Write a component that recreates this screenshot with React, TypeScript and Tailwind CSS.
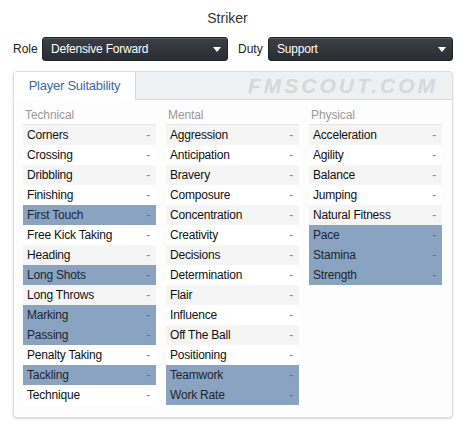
import React from 'react';

type Attr = { name: string; hl?: boolean };

const technical: Attr[] = [
  { name: 'Corners' },
  { name: 'Crossing' },
  { name: 'Dribbling' },
  { name: 'Finishing' },
  { name: 'First Touch', hl: true },
  { name: 'Free Kick Taking' },
  { name: 'Heading' },
  { name: 'Long Shots', hl: true },
  { name: 'Long Throws' },
  { name: 'Marking', hl: true },
  { name: 'Passing', hl: true },
  { name: 'Penalty Taking' },
  { name: 'Tackling', hl: true },
  { name: 'Technique' },
];

const mental: Attr[] = [
  { name: 'Aggression' },
  { name: 'Anticipation' },
  { name: 'Bravery' },
  { name: 'Composure' },
  { name: 'Concentration' },
  { name: 'Creativity' },
  { name: 'Decisions' },
  { name: 'Determination' },
  { name: 'Flair' },
  { name: 'Influence' },
  { name: 'Off The Ball' },
  { name: 'Positioning' },
  { name: 'Teamwork', hl: true },
  { name: 'Work Rate', hl: true },
];

const physical: Attr[] = [
  { name: 'Acceleration' },
  { name: 'Agility' },
  { name: 'Balance' },
  { name: 'Jumping' },
  { name: 'Natural Fitness' },
  { name: 'Pace', hl: true },
  { name: 'Stamina', hl: true },
  { name: 'Strength', hl: true },
];

function Select({ value, width }: { value: string; width: string }) {
  return (
    <div
      className={`${width} h-6 rounded-[3px] border border-[#1f2226] bg-gradient-to-b from-[#3c4046] to-[#2a2d32] flex items-center justify-between pl-[8px] pr-[6px] text-white text-[12px] tracking-[-0.2px] shadow-[inset_0_1px_0_#55595f]`}
    >
      <span>{value}</span>
      <svg width="8" height="5" viewBox="0 0 8 5">
        <path d="M0 0 L8 0 L4 5 Z" fill="#ffffff" />
      </svg>
    </div>
  );
}

function Column({ title, items }: { title: string; items: Attr[] }) {
  return (
    <div className="flex flex-col">
      <div className="h-[20px] border-b border-[#e6e6e6] text-[#9a9a9a] text-[12px] tracking-[-0.1px] leading-[20px] pl-[2px]">
        {title}
      </div>
      {items.map((a, i) => (
        <div
          key={a.name}
          className={`h-[20px] flex items-center justify-between pl-[4px] pr-[6px] text-[12px] tracking-[-0.2px] ${
            a.hl
              ? 'bg-[#8aa3c0] text-[#1e2530]'
              : i % 2 === 0
              ? 'bg-[#f5f5f5] text-[#111]'
              : 'bg-white text-[#111]'
          }`}
        >
          <span>{a.name}</span>
          <span className={a.hl ? 'text-[#5d6f85]' : 'text-[#888]'}>-</span>
        </div>
      ))}
    </div>
  );
}

export default function App() {
  return (
    <div
      className="w-[466px] h-[431px] bg-white text-[#222] px-[13px] pt-[8px]"
      style={{ fontFamily: '"Liberation Sans", Arial, sans-serif' }}
    >
      <div className="text-center text-[14px] text-[#333] leading-[20px] pr-[11px]">Striker</div>

      <div className="mt-[9px] flex items-center text-[12px]">
        <span className="w-[29px] text-[#222]">Role</span>
        <Select value="Defensive Forward" width="w-[186px]" />
        <span className="ml-[10px] w-[30px] text-[#222]">Duty</span>
        <Select value="Support" width="w-[185px]" />
      </div>

      <div className="mt-[10px] h-[347px] rounded-[4px] border border-[#dcdcdc] bg-[#fdfdfd] shadow-[0_1px_2px_rgba(0,0,0,0.15)] overflow-hidden">
        <div className="h-[28px] flex bg-[#eef0f2] border-b border-[#d8d8d8]">
          <div className="w-[122px] bg-white border-r border-[#d8d8d8] flex items-center justify-center text-[13px] tracking-[-0.25px] text-[#3b6aa8] h-[28px]">
            Player Suitability
          </div>
          <div className="flex-1 flex items-center justify-end pr-[14px]">
            <span className="italic font-bold text-[21px] tracking-[3px] text-[#d6d8da]">
              FMSCOUT.COM
            </span>
          </div>
        </div>
        <div className="grid grid-cols-3 gap-x-[10px] pl-[9px] pr-[10px] pt-[5px]">
          <Column title="Technical" items={technical} />
          <Column title="Mental" items={mental} />
          <Column title="Physical" items={physical} />
        </div>
      </div>
    </div>
  );
}
